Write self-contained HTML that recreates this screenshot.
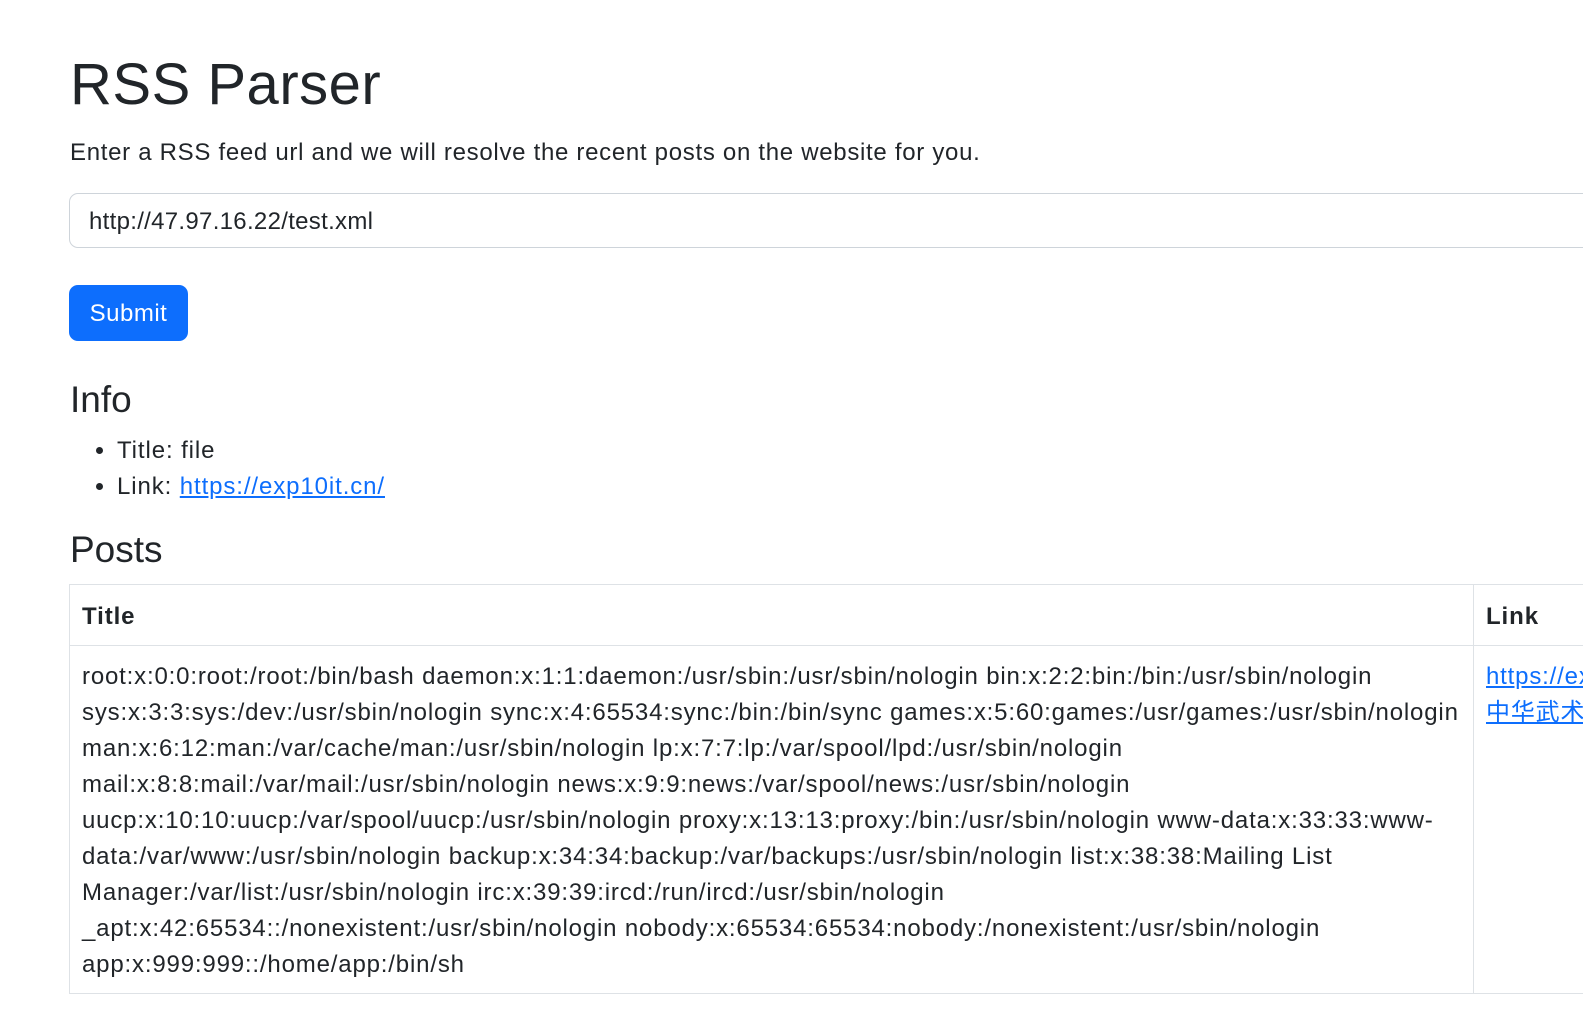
<!DOCTYPE html>
<html><head><meta charset="utf-8"><style>
html,body{margin:0;padding:0;background:#fff;overflow:hidden;width:1583px;height:1035px}
body{font-family:"Liberation Sans","Noto Sans CJK SC",sans-serif;color:#212529;font-size:24px;line-height:36px;letter-spacing:0.9px}
.c{position:absolute;left:69px;top:0;width:1514px;height:1035px;overflow:hidden}
h1{position:absolute;left:1px;top:42px;margin:0;font-size:58px;font-weight:400;line-height:86px;white-space:nowrap;letter-spacing:0.5px}
.lead{position:absolute;left:1px;top:135px;white-space:nowrap;font-size:24px;letter-spacing:0.7px}
.inp{position:absolute;left:0;top:193px;width:1700px;height:53px;border:1px solid #ced4da;border-radius:9px;box-sizing:content-box}
.inp span{position:absolute;left:19px;top:10px;letter-spacing:0.3px}
.btn{position:absolute;left:0;top:285px;width:119px;height:56px;background:#0d6efd;border-radius:9px;color:#fff;text-align:center;line-height:58px;letter-spacing:0.5px}
h3{position:absolute;left:1px;margin:0;font-size:37px;font-weight:400;line-height:48px;letter-spacing:0}
ul{position:absolute;left:0;top:433px;margin:0;padding-left:48px}
a{color:#0d6efd;text-decoration:underline}
table{position:absolute;left:0;top:584px;border-collapse:collapse;white-space:nowrap;table-layout:fixed;width:1714px}
td,th{border:1px solid #dee2e6;padding:12px 12px;text-align:left;vertical-align:top;overflow:hidden}
th{height:35px;font-weight:700;padding-top:14px;padding-bottom:10px}
td{padding-top:13px;padding-bottom:10px;letter-spacing:0.83px}
</style></head><body><div class="c">
<h1>RSS Parser</h1>
<div class="lead">Enter a RSS feed url and we will resolve the recent posts on the website for you.</div>
<div class="inp"><span>http://47.97.16.22/test.xml</span></div>
<div class="btn">Submit</div>
<h3 style="top:376px">Info</h3>
<ul><li>Title: file</li><li>Link: <a>https://exp10it.cn/</a></li></ul>
<h3 style="top:526px">Posts</h3>
<table><colgroup><col style="width:1404px"><col style="width:310px"></colgroup><tr><th>Title</th><th>Link</th></tr>
<tr><td>root:x:0:0:root:/root:/bin/bash daemon:x:1:1:daemon:/usr/sbin:/usr/sbin/nologin bin:x:2:2:bin:/bin:/usr/sbin/nologin<br>sys:x:3:3:sys:/dev:/usr/sbin/nologin sync:x:4:65534:sync:/bin:/bin/sync games:x:5:60:games:/usr/games:/usr/sbin/nologin<br>man:x:6:12:man:/var/cache/man:/usr/sbin/nologin lp:x:7:7:lp:/var/spool/lpd:/usr/sbin/nologin<br>mail:x:8:8:mail:/var/mail:/usr/sbin/nologin news:x:9:9:news:/var/spool/news:/usr/sbin/nologin<br>uucp:x:10:10:uucp:/var/spool/uucp:/usr/sbin/nologin proxy:x:13:13:proxy:/bin:/usr/sbin/nologin www-data:x:33:33:www-<br>data:/var/www:/usr/sbin/nologin backup:x:34:34:backup:/var/backups:/usr/sbin/nologin list:x:38:38:Mailing List<br>Manager:/var/list:/usr/sbin/nologin irc:x:39:39:ircd:/run/ircd:/usr/sbin/nologin<br>_apt:x:42:65534::/nonexistent:/usr/sbin/nologin nobody:x:65534:65534:nobody:/nonexistent:/usr/sbin/nologin<br>app:x:999:999::/home/app:/bin/sh</td>
<td><a>https://exp10it.cn/</a><br><a>中华武术</a></td></tr></table>
</div></body></html>
